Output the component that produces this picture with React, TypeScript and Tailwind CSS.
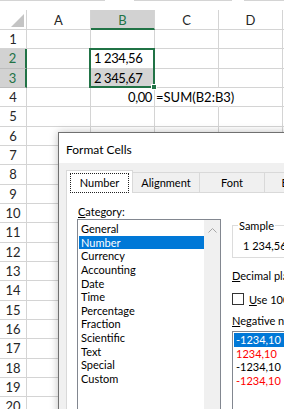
import React from 'react';

const cats = ['General', 'Number', 'Currency', 'Accounting', 'Date', 'Time', 'Percentage', 'Fraction', 'Scientific', 'Text', 'Special', 'Custom'];

function SheetRow({ n }: { n: number }) {
  const sel = n === 2 || n === 3;
  const h = n % 3 === 2 ? 'h-[20px]' : 'h-[19px]';
  let bText: string | null = null;
  if (n === 2) bText = '1 234,56';
  if (n === 3) bText = '2 345,67';
  if (n === 4) bText = '0,00';
  return (
    <div className={`flex ${h}`}>
      <div
        className={
          sel
            ? 'w-[27px] shrink-0 flex items-center justify-center bg-[#d2d2d2] text-[#217346] border-b border-b-[#bdbdbd] border-r-2 border-r-[#217346]'
            : 'w-[27px] shrink-0 flex items-center justify-center text-[#262626] border-b border-r border-[#d4d4d4]'
        }
      >
        {n}
      </div>
      <div className="w-[64px] shrink-0 border-b border-r border-[#d4d4d4]" />
      <div
        className={`w-[64px] shrink-0 border-b border-r border-[#d4d4d4] flex items-center whitespace-nowrap tracking-[-0.4px] ${
          n === 3 ? 'bg-[#d4d4d4]' : ''
        } ${n === 4 ? 'justify-end pr-[2px]' : 'pl-[3px]'}`}
      >
        {bText}
      </div>
      <div
        className={`w-[64px] shrink-0 border-b border-[#d4d4d4] flex items-center whitespace-nowrap pl-[1px] ${
          n === 4 ? 'border-r border-r-transparent' : 'border-r'
        }`}
      >
        {n === 4 ? '=SUM(B2:B3)' : null}
      </div>
      <div className="w-[64px] shrink-0 border-b border-r border-[#d4d4d4]" />
      <div className="w-[64px] shrink-0 border-b border-r border-[#d4d4d4]" />
    </div>
  );
}

export default function App() {
  const rows = Array.from({ length: 21 }, (_, i) => i + 1);
  return (
    <div className="relative w-[284px] h-[409px] overflow-hidden bg-white font-['Lato',sans-serif] text-[13px] leading-none text-black">
      <div className="h-[10px] flex items-start">
        <div className="w-[106px] h-[1px] bg-[#d4d4d4]" />
        <div className="w-[29px]" />
        <div className="w-[99px] h-[1px] bg-[#d4d4d4]" />
        <div className="w-[13px]" />
        <div className="w-[40px] h-[1px] bg-[#d4d4d4]" />
      </div>
      <div className="flex h-[20px]">
        <div className="w-[27px] shrink-0 border-b border-r border-[#d4d4d4] flex items-end justify-end pr-[2px] pb-[2px]">
          <svg width="13" height="13" viewBox="0 0 13 13">
            <polygon points="13,0 13,13 0,13" fill="#c4c4c4" />
          </svg>
        </div>
        <div className="w-[64px] shrink-0 border-b border-r border-[#d4d4d4] flex items-center justify-center pt-[1px] text-[#262626]">A</div>
        <div className="w-[64px] shrink-0 border-b-2 border-b-[#217346] border-r border-r-[#d4d4d4] bg-[#d2d2d2] flex items-center justify-center pt-[2px] text-[#217346]">B</div>
        <div className="w-[64px] shrink-0 border-b border-r border-[#d4d4d4] flex items-center justify-center pt-[1px] text-[#262626]">C</div>
        <div className="w-[64px] shrink-0 border-b border-r border-[#d4d4d4] flex items-center justify-center pt-[1px] text-[#262626]">D</div>
        <div className="w-[64px] shrink-0 border-b border-r border-[#d4d4d4]" />
      </div>
      {rows.map((n) => (
        <SheetRow key={n} n={n} />
      ))}

      <div className="absolute left-[89px] top-[48px] w-[66px] h-[40px] border-2 border-[#217346]" />
      <div className="absolute left-[151px] top-[84px] w-[6px] h-[6px] bg-[#217346] border border-white" />

      <div className="absolute left-[58px] top-[132px] w-[440px] h-[320px] border border-[#707070] bg-[#f0f0f0] shadow-[0_0_8px_rgba(0,0,0,0.25)] text-[11px] leading-[13px] text-black">
        <div className="h-[30px] bg-white flex items-center pl-[7px] pt-[2px] text-[12px]">Format Cells</div>
        <div className="pl-[7px] pt-[7px]">
          <div className="flex items-end h-[22px]">
            <div className="relative z-10 w-[67px] h-[23px] mb-[-1px] bg-white border border-b-0 border-[#d9d9d9] flex items-center justify-center">
              <div className="absolute left-[3px] right-[3px] top-[2px] bottom-0 border border-dotted border-[#222]" />
              <span>Number</span>
            </div>
            <div className="w-[67px] h-[20px] border-t border-r border-[#d9d9d9] flex items-center justify-center">Alignment</div>
            <div className="w-[65px] h-[20px] border-t border-r border-[#d9d9d9] flex items-center justify-center">Font</div>
            <div className="w-[67px] h-[20px] border-t border-r border-[#d9d9d9] flex items-center justify-center">Border</div>
          </div>
          <div className="h-[300px] border border-[#d9d9d9] bg-white flex pl-[10px]">
            <div className="pt-[12px] flex flex-col">
              <div className="pl-[1px]">
                <span className="underline">C</span>ategory:
              </div>
              <div className="mt-[1px] w-[144px] h-[260px] border border-[#828790] bg-white flex">
                <div className="w-[126px] pt-[2px] pl-[1px]">
                  {cats.map((c) => (
                    <div
                      key={c}
                      className={`h-[13.64px] leading-[13.64px] pl-[2px] whitespace-nowrap ${
                        c === 'Number' ? 'bg-[#0078d7] text-white' : ''
                      }`}
                    >
                      {c}
                    </div>
                  ))}
                </div>
                <div className="w-[16px] bg-[#f0f0f0] flex justify-center pt-[8px]">
                  <svg width="9" height="5" viewBox="0 0 9 5">
                    <polyline points="0.5,4.5 4.5,0.5 8.5,4.5" fill="none" stroke="#a6a6a6" strokeWidth="1" />
                  </svg>
                </div>
              </div>
            </div>
            <div className="ml-[11px] pt-[32px] flex flex-col">
              <div className="relative w-[200px] h-[33px] border border-[#dcdcdc]">
                <div className="absolute left-[5px] -top-[7px] px-[1px] bg-white">Sample</div>
                <div className="pl-[10px] pt-[13px] whitespace-nowrap">1 234,56</div>
              </div>
              <div className="mt-[11px] whitespace-nowrap">
                <span className="underline">D</span>ecimal places:
              </div>
              <div className="mt-[11px] flex items-start">
                <div className="w-[12px] h-[12px] border border-[#333] bg-white" />
                <div className="ml-[5px] whitespace-nowrap">
                  <span className="underline">U</span>se 1000 Separator ( )
                </div>
              </div>
              <div className="mt-[8px] whitespace-nowrap">
                <span className="underline">N</span>egative numbers:
              </div>
              <div className="mt-[4px] w-[160px] h-[120px] border border-[#828790] bg-white pt-[1px] pl-[1px]">
                <div className="h-[13.64px] leading-[13.64px] pl-[2px] bg-[#0078d7] text-white">-1234,10</div>
                <div className="h-[13.64px] leading-[13.64px] pl-[2px] text-[#ff0000]">1234,10</div>
                <div className="h-[13.64px] leading-[13.64px] pl-[2px]">-1234,10</div>
                <div className="h-[13.64px] leading-[13.64px] pl-[2px] text-[#ff0000]">-1234,10</div>
              </div>
            </div>
          </div>
        </div>
      </div>
    </div>
  );
}
